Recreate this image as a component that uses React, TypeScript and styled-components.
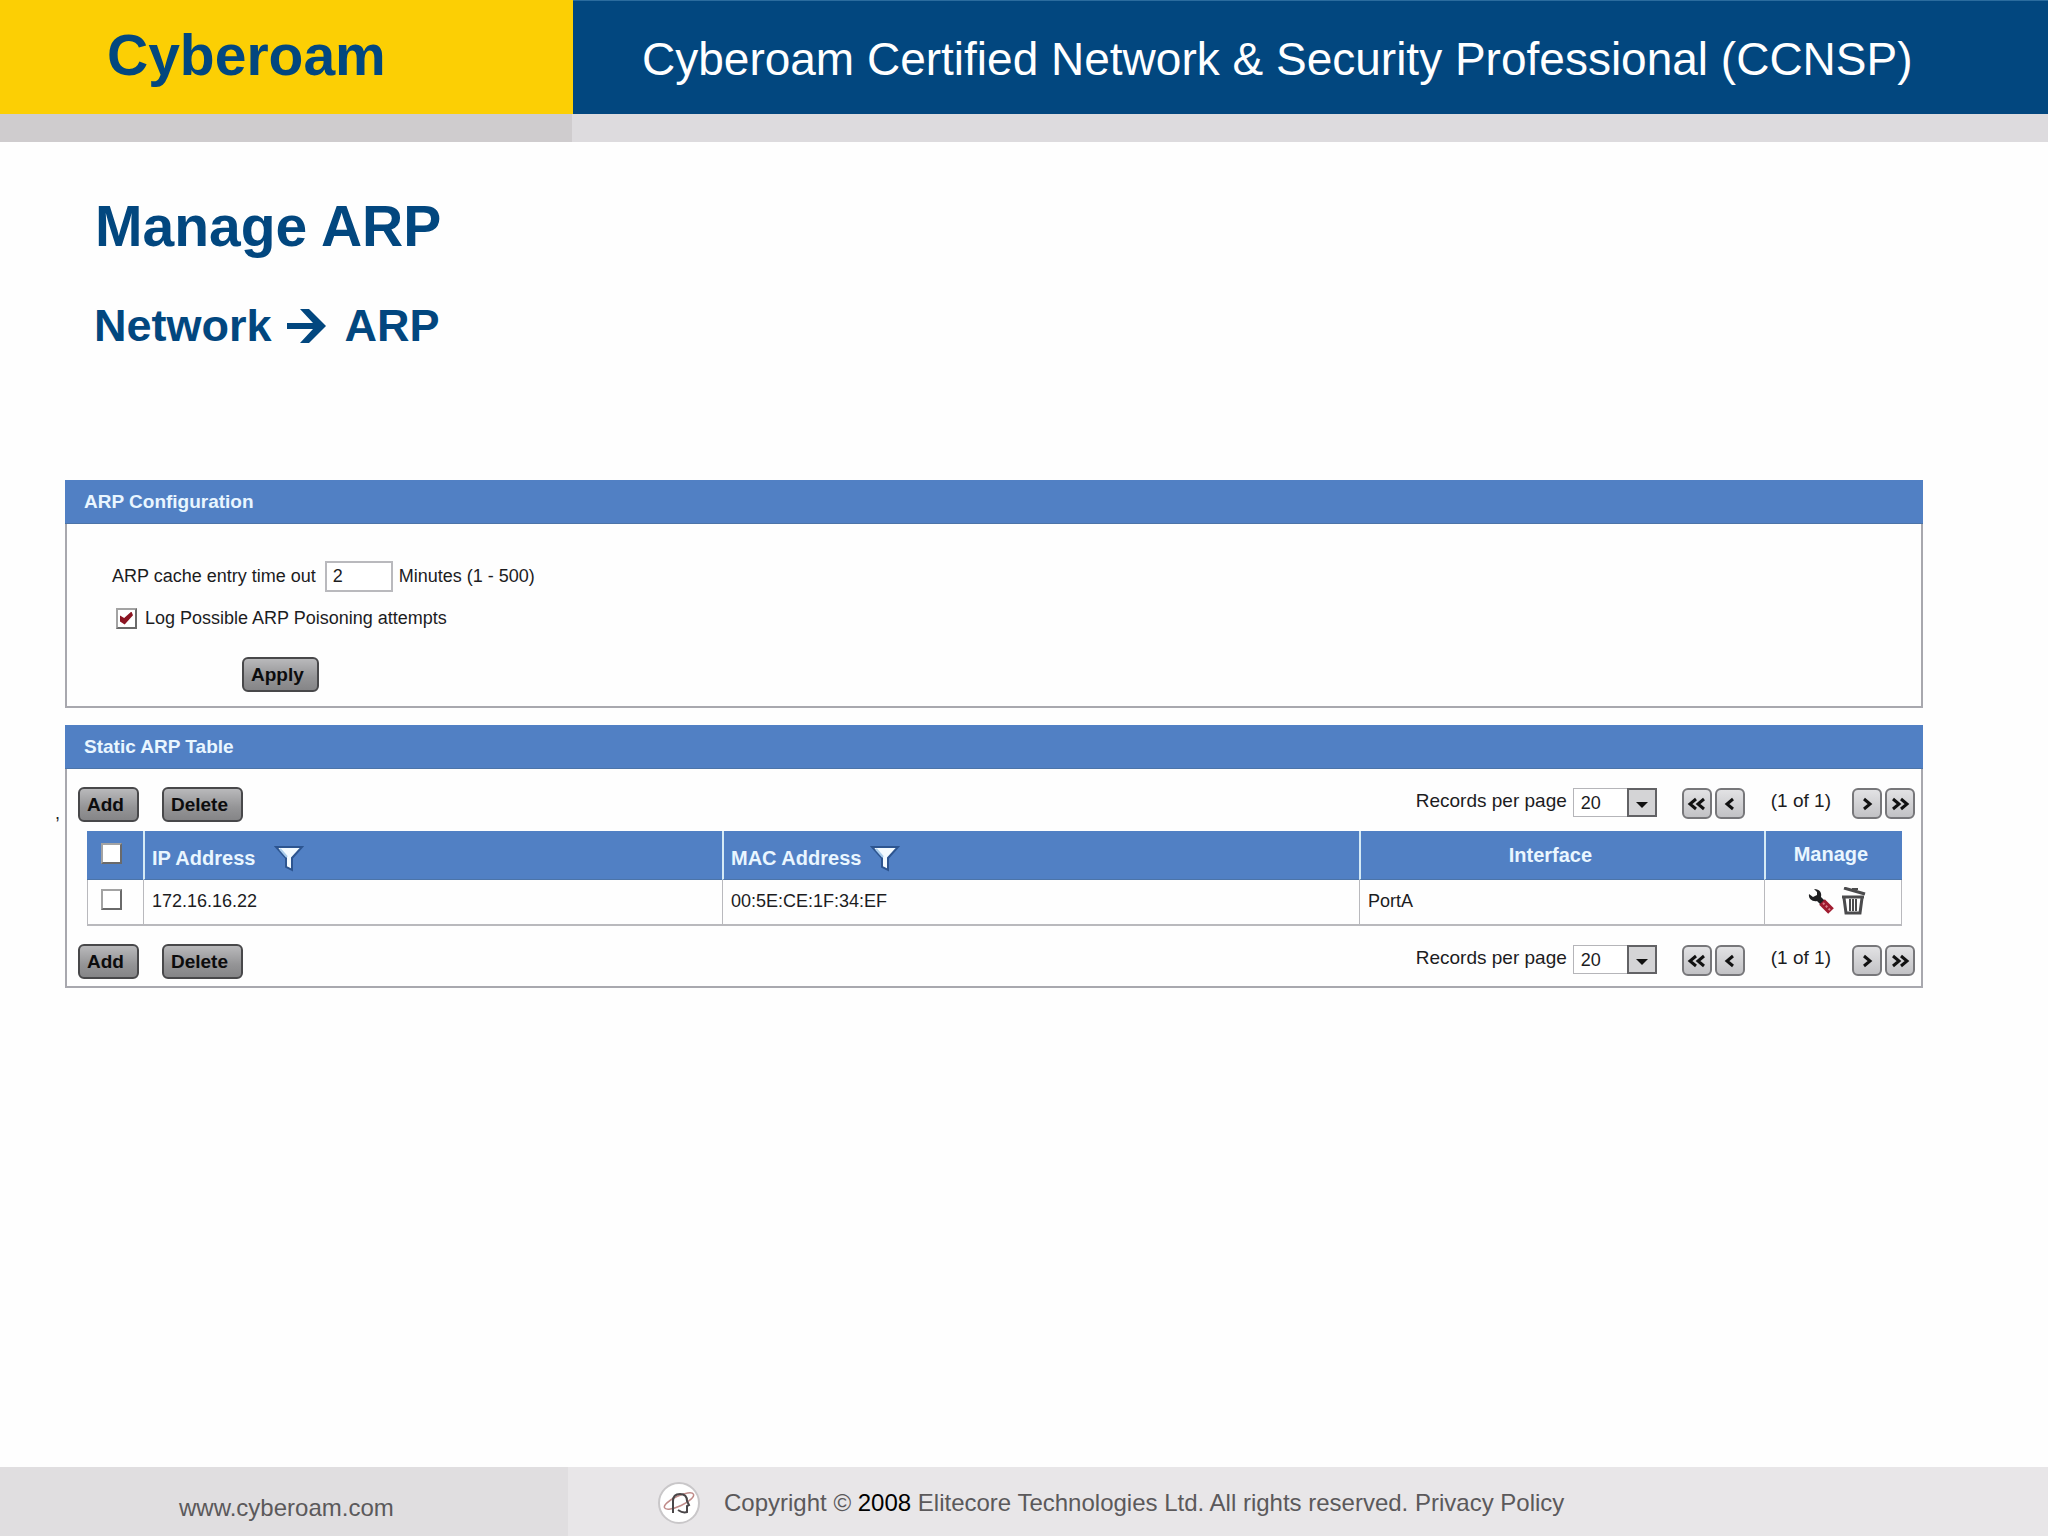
import React from "react";
import styled, { createGlobalStyle } from "styled-components";

const color = {
  navy: "#02477f",
  yellow: "#fccf04",
  panel: "#5180c4",
  border: "#a8a8ae",
  ink: "#1c1c1e",
};

const GlobalStyle = createGlobalStyle`
  *, *::before, *::after { box-sizing: border-box; }
  body {
    margin: 0;
    background: #fefefe;
    color: ${color.ink};
    font-family: "Liberation Sans", Arial, Helvetica, sans-serif;
  }
  button, input, select { font-family: inherit; }
`;

const Page = styled.div`
  min-height: 100vh;
  display: flex;
  flex-direction: column;
`;

const Header = styled.header`
  display: flex;
  height: 114px;
`;

const Brand = styled.div`
  flex: 0 0 573px;
  display: flex;
  align-items: center;
  padding: 0 0 5px 107px;
  background: ${color.yellow};
  color: ${color.navy};
  font-size: 57px;
  font-weight: bold;
`;

const Course = styled.div`
  flex: 1;
  display: flex;
  align-items: center;
  padding: 2px 0 0 69px;
  border-top: 1px solid #2b6c9e;
  background: ${color.navy};
  color: #fff;
  font-size: 46px;
  white-space: nowrap;
`;

const Strip = styled.div`
  height: 28px;
  display: flex;
  background: #dddbde;
  &::before {
    content: "";
    width: 572px;
    background: #cfccce;
  }
`;

const Main = styled.main`
  flex: 1;
  padding: 52px 125px 48px 55px;
`;

const Title = styled.h1`
  margin: 0 0 42px 40px;
  color: ${color.navy};
  font-size: 57px;
  line-height: 64px;
`;

const Path = styled.h2`
  display: flex;
  align-items: center;
  gap: 15px;
  margin: 0 0 128px 39px;
  color: ${color.navy};
  font-size: 45px;
  line-height: 52px;
  svg { margin-right: 4px; }
`;

const Content = styled.div`
  display: grid;
  grid-template-columns: 10px 1fr;
  row-gap: 17px;
`;

const Mark = styled.span`
  align-self: center;
  padding-bottom: 88px;
  font-size: 18px;
  line-height: 24px;
`;

const Panel = styled.section`
  grid-column: 2;
`;

const PanelTitle = styled.h3`
  margin: 0;
  padding-left: 19px;
  background: ${color.panel};
  border-bottom: 1px solid #4c74a8;
  color: #e9f6ff;
  font-size: 19px;
  line-height: 43px;
`;

const PanelBody = styled.div`
  border: 2px solid ${color.border};
  border-top: 0;
`;

const ConfigForm = styled.form`
  padding: 37px 0 14px 45px;
`;

const Field = styled.div`
  display: flex;
  align-items: center;
  font-size: 18px;
  line-height: 31px;
  white-space: pre;
`;

const CheckField = styled(Field)`
  gap: 8px;
  margin: 15px 0 28px 4px;
  line-height: 22px;
`;

const Minutes = styled.input`
  width: 68px;
  height: 31px;
  margin: 0 6px 0 9px;
  padding: 0 6px;
  border: 2px solid #b9b9bd;
  background: #fff;
  color: ${color.ink};
  font-size: 18px;
`;

const Check = styled.input.attrs({ type: "checkbox" })`
  appearance: none;
  display: block;
  width: 21px;
  height: 21px;
  margin: 0;
  border: 2px solid;
  border-color: #a3a3a3 #6a6a6a #6a6a6a #a3a3a3;
  background: #fff;
  &:checked::after {
    content: "";
    display: block;
    width: 13px;
    height: 13px;
    margin: 2px;
    background: #8c1522;
    clip-path: polygon(0 30%, 32% 50%, 88% 0, 100% 28%, 36% 100%, 0 76%);
  }
`;

const Button = styled.button`
  height: 35px;
  padding: 0 13px 0 7px;
  border: 2px solid #48484a;
  border-radius: 6px;
  background: linear-gradient(#b9b9bb, #949496 60%, #858587);
  color: #0c0c0d;
  font-size: 19px;
  font-weight: bold;
  line-height: 31px;
`;

const ApplyButton = styled(Button)`
  display: block;
  margin-left: 130px;
`;

const Toolbar = styled.div`
  display: flex;
  align-items: flex-start;
  gap: 23px;
  padding: 18px 6px 7px 11px;
`;

const Pager = styled.div`
  display: flex;
  align-items: flex-start;
  margin-left: auto;
  padding-top: 1px;
  font-size: 19px;
  line-height: 25px;
`;

const SelectBox = styled.span`
  position: relative;
  margin: 0 25px 0 6px;
  svg {
    position: absolute;
    top: 0;
    right: 0;
    pointer-events: none;
  }
`;

const Select = styled.select`
  appearance: none;
  display: block;
  width: 84px;
  height: 29px;
  padding: 0 7px;
  border: 1px solid #b5b5b9;
  border-radius: 0;
  background: #fff;
  color: ${color.ink};
  font-size: 18px;
`;

const PageButtons = styled.span`
  display: flex;
  gap: 3px;
`;

const PageButton = styled.button`
  display: grid;
  place-items: center;
  width: 30px;
  height: 31px;
  padding: 0;
  border: 2px solid #77777a;
  border-radius: 6px;
  background: linear-gradient(#e2e2e4, #c2c2c5);
`;

const PageCount = styled.span`
  margin: 0 21px 0 26px;
`;

const Table = styled.table`
  width: calc(100% - 39px);
  margin: 2px 19px 0 20px;
  table-layout: fixed;
  border-spacing: 0;
`;

const Col = styled.col<{ $width?: string }>`
  width: ${(p) => p.$width ?? "auto"};
`;

const HeadCell = styled.th<{ $center?: boolean; $pad?: string }>`
  height: 49px;
  padding: ${(p) => p.$pad ?? "0"};
  border-bottom: 1px solid #4c74a8;
  background: ${color.panel};
  color: #e9f6ff;
  font-size: 20px;
  line-height: 26px;
  text-align: ${(p) => (p.$center ? "center" : "left")};
  & + & { border-left: 2px solid #d5eaf5; }
`;

const FilterLabel = styled.span<{ $gap: number }>`
  display: flex;
  align-items: center;
  gap: ${(p) => p.$gap}px;
`;

const Cell = styled.td`
  height: 46px;
  padding: 0 0 2px 8px;
  border: 0 solid #b9b9bd;
  border-width: 0 0 2px 1px;
  font-size: 18px;
  &:last-child { border-right-width: 1px; }
`;

const CheckCell = styled(Cell)`
  padding: 0 0 5px 13px;
`;

const Actions = styled.div`
  display: flex;
  justify-content: center;
  gap: 7px;
`;

const IconButton = styled.button`
  display: block;
  padding: 0;
  border: 0;
  background: none;
  svg { display: block; }
`;

const Footer = styled.footer`
  display: flex;
  height: 69px;
  background: #e8e6e8;
  color: #5b595b;
  font-size: 24px;
  a { color: inherit; text-decoration: none; }
`;

const Site = styled.div`
  flex: 0 0 568px;
  padding: 27px 0 0 179px;
  background: #e0dee0;
  font-size: 24px;
  line-height: 28px;
`;

const Legal = styled.div`
  display: flex;
  align-items: center;
  gap: 24px;
  padding: 2px 0 0 90px;
  b { color: #000; font-weight: normal; }
`;

const Funnel = () => (
  <svg width="30" height="27" viewBox="0 0 30 27" aria-hidden="true">
    <path d="M2 2H28L18 13V25L12 22V13Z" fill="#f4fbff" stroke="#2d5590" strokeWidth="2" />
    <path d="M6 4L13 12" stroke="#a9cdec" strokeWidth="2" />
  </svg>
);

const Wrench = () => (
  <svg width="26" height="26" viewBox="0 0 26 26" aria-hidden="true">
    <path d="M6 1C12 1 14 5 13 9L17 13L13 17L9 13C5 14 0 11 1 6L5 9L9 7L9 4Z" fill="#202022" />
    <path d="M14 14L23 23" stroke="#a01c30" strokeWidth="8" />
    <path d="M15 15L22 22" stroke="#d9808c" strokeWidth="2" strokeDasharray="2 2" />
  </svg>
);

const Trash = () => (
  <svg width="25" height="28" viewBox="0 0 25 28" fill="none" stroke="#4b4b4d" aria-hidden="true">
    <path d="M3 1L24 7" strokeWidth="3" />
    <path d="M11 2L17 2" strokeWidth="2" />
    <path d="M1 10H23" strokeWidth="3" />
    <path d="M3 11L5 26H19L21 11" strokeWidth="3" />
    <path d="M9 12V24M12 12V24M15 12V24" strokeWidth="2" />
  </svg>
);

const Chevrons = ({ double, flip }: { double?: boolean; flip?: boolean }) => (
  <svg
    width="20"
    height="14"
    viewBox="0 0 20 14"
    fill="none"
    stroke="#111"
    strokeWidth="3"
    transform={flip ? "scale(-1 1)" : undefined}
    aria-hidden="true"
  >
    <path d={double ? "M9 2L3 7L9 12M17 2L11 7L17 12" : "M13 2L7 7L13 12"} />
  </svg>
);

const Arrow = () => (
  <svg width="39" height="34" viewBox="0 0 39 34" role="img" aria-label="to">
    <path d="M0 14H26L13 0H22L39 17L22 34H13L26 20H0Z" fill={color.navy} />
  </svg>
);

const Logo = () => (
  <svg width="42" height="42" viewBox="0 0 42 42" fill="none" aria-hidden="true">
    <circle cx="21" cy="21" r="20" fill="#fff" stroke="#c9c7c9" strokeWidth="2" />
    <ellipse cx="21" cy="19" rx="16" ry="5" transform="rotate(-25 21 19)" stroke="#c08b89" strokeWidth="1.5" />
    <path d="M15 31V19C15 14 18 12 22 12C27 12 29 15 29 19L31 23L29 24V30C26 31 23 30 20 28" stroke="#4a4648" strokeWidth="2" />
  </svg>
);

function RecordsPager({ id }: { id: string }) {
  return (
    <Pager>
      <label htmlFor={id}>Records per page</label>
      <SelectBox>
        <Select id={id} defaultValue="20">
          <option>20</option>
          <option>50</option>
        </Select>
        <svg width="30" height="29" viewBox="0 0 30 29" aria-hidden="true">
          <rect x="1" y="1" width="28" height="27" fill="#d4d4d6" stroke="#626265" strokeWidth="2" />
          <path d="M9 14H21L15 20Z" fill="#111" />
        </svg>
      </SelectBox>
      <PageButtons>
        <PageButton type="button" aria-label="First page"><Chevrons double /></PageButton>
        <PageButton type="button" aria-label="Previous page"><Chevrons /></PageButton>
      </PageButtons>
      <PageCount>(1 of 1)</PageCount>
      <PageButtons>
        <PageButton type="button" aria-label="Next page"><Chevrons flip /></PageButton>
        <PageButton type="button" aria-label="Last page"><Chevrons double flip /></PageButton>
      </PageButtons>
    </Pager>
  );
}

function TableToolbar({ id }: { id: string }) {
  return (
    <Toolbar>
      <Button type="button">Add</Button>
      <Button type="button">Delete</Button>
      <RecordsPager id={id} />
    </Toolbar>
  );
}

const entries = [{ ip: "172.16.16.22", mac: "00:5E:CE:1F:34:EF", port: "PortA" }];

export default function App() {
  return (
    <Page>
      <GlobalStyle />
      <Header>
        <Brand>Cyberoam</Brand>
        <Course>Cyberoam Certified Network &amp; Security Professional (CCNSP)</Course>
      </Header>
      <Strip />
      <Main>
        <Title>Manage ARP</Title>
        <Path>Network <Arrow /> ARP</Path>
        <Content>
          <Panel>
            <PanelTitle>ARP Configuration</PanelTitle>
            <PanelBody>
              <ConfigForm onSubmit={(e) => e.preventDefault()}>
                <Field>
                  <label htmlFor="timeout">ARP cache entry time out</label>
                  <Minutes id="timeout" defaultValue="2" />
                  <span>Minutes (1 - 500)</span>
                </Field>
                <CheckField>
                  <Check id="poison" defaultChecked />
                  <label htmlFor="poison">Log Possible ARP Poisoning attempts</label>
                </CheckField>
                <ApplyButton type="submit">Apply</ApplyButton>
              </ConfigForm>
            </PanelBody>
          </Panel>
          <Mark>,</Mark>
          <Panel>
            <PanelTitle>Static ARP Table</PanelTitle>
            <PanelBody>
              <TableToolbar id="records-top" />
              <Table>
                <colgroup>
                  <Col $width="56px" />
                  <Col $width="31.9%" />
                  <Col $width="35.1%" />
                  <Col $width="22.3%" />
                  <Col />
                </colgroup>
                <thead>
                  <tr>
                    <HeadCell $pad="0 0 4px 14px"><Check aria-label="Select all" /></HeadCell>
                    <HeadCell $pad="6px 0 0 7px"><FilterLabel $gap={19}>IP Address <Funnel /></FilterLabel></HeadCell>
                    <HeadCell $pad="6px 0 0 7px"><FilterLabel $gap={9}>MAC Address <Funnel /></FilterLabel></HeadCell>
                    <HeadCell $center $pad="0 24px 0 0">Interface</HeadCell>
                    <HeadCell $center $pad="0 6px 2px 0">Manage</HeadCell>
                  </tr>
                </thead>
                <tbody>
                  {entries.map((e) => (
                    <tr key={e.ip}>
                      <CheckCell><Check aria-label={`Select ${e.ip}`} /></CheckCell>
                      <Cell>{e.ip}</Cell>
                      <Cell>{e.mac}</Cell>
                      <Cell>{e.port}</Cell>
                      <Cell>
                        <Actions>
                          <IconButton type="button" aria-label="Edit"><Wrench /></IconButton>
                          <IconButton type="button" aria-label="Delete"><Trash /></IconButton>
                        </Actions>
                      </Cell>
                    </tr>
                  ))}
                </tbody>
              </Table>
              <TableToolbar id="records-bottom" />
            </PanelBody>
          </Panel>
        </Content>
      </Main>
      <Footer>
        <Site><a href="#home">www.cyberoam.com</a></Site>
        <Legal>
          <Logo />
          <span>
            Copyright © <b>2008</b> Elitecore Technologies Ltd. All rights reserved. <a href="#privacy">Privacy Policy</a>
          </span>
        </Legal>
      </Footer>
    </Page>
  );
}
